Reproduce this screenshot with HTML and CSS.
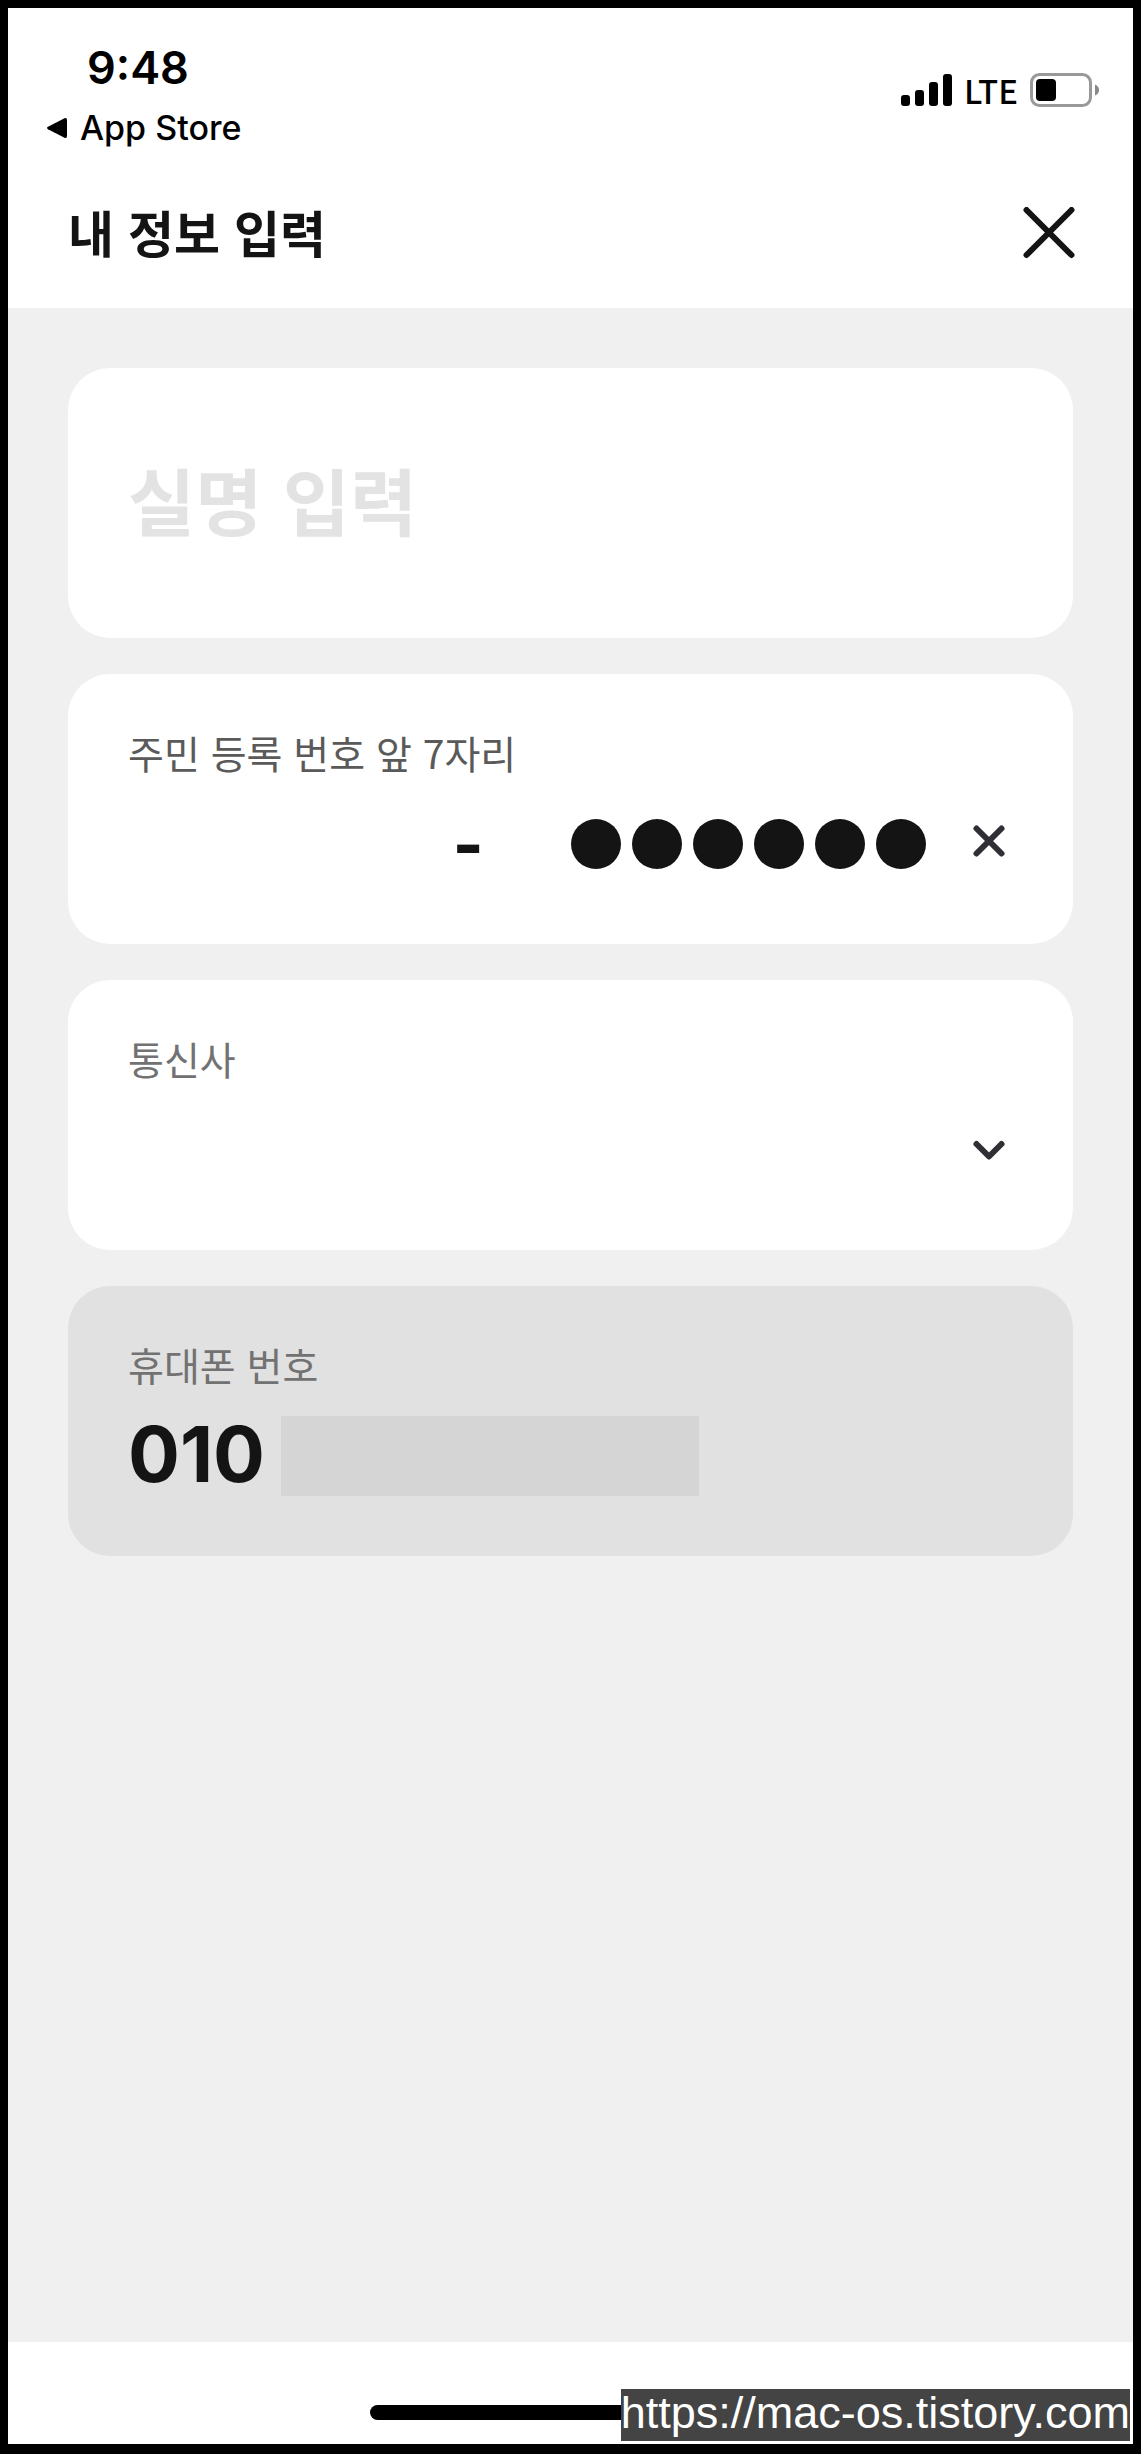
FILE: index.html
```html
<!DOCTYPE html>
<html lang="ko">
<head>
<meta charset="utf-8">
<meta name="viewport" content="width=device-width, initial-scale=1">
<title>내 정보 입력</title>
<link rel="stylesheet" href="styles.css">
</head>
<body>
<div class="screen">
  <div class="status">
    <div class="status-left">
      <span class="time">9:48</span>
      <a class="back" href="#">
        <svg width="22" height="22" viewBox="0 0 22 22" aria-hidden="true"><path d="M2 9.800 18.500 1.300Q21 .3 21 3V19Q21 21.700 18.500 20.700L2 12.200Q0 11 2 9.800Z"/></svg>
        App Store
      </a>
    </div>
    <div class="status-right">
      <svg width="51" height="34" viewBox="0 0 51 34" aria-hidden="true"><rect x="0" y="22" width="9" height="11" rx="3"/><rect x="14" y="17" width="9" height="16" rx="3"/><rect x="28" y="9" width="9" height="24" rx="3"/><rect x="42" y="1" width="9" height="32" rx="3"/></svg>
      <span class="network">LTE</span>
      <svg width="70" height="34" viewBox="0 0 70 34" aria-hidden="true"><rect x="1.500" y="1.500" width="59" height="31" rx="8" fill="none" stroke="#999" stroke-width="3"/><rect x="6" y="6" width="20" height="22" rx="4"/><path d="M65 11.500Q69 13 69 17T65 22.500Z" fill="#888"/></svg>
    </div>
  </div>

  <header class="header">
    <h1 class="title">내 정보 입력</h1>
    <button class="icon-button" type="button" aria-label="닫기">
      <svg width="52" height="52" viewBox="0 0 52 52" aria-hidden="true"><path d="M3.500 3 48.500 48M48.500 3 3.500 48" fill="none" stroke="#141414" stroke-width="6" stroke-linecap="round"/></svg>
    </button>
  </header>

  <main class="content">
    <form class="form">
      <div class="card card-name">
        <input class="field" type="text" aria-label="실명 입력" placeholder="실명 입력">
      </div>

      <div class="card">
        <label class="label label-filled" for="rrn">주민 등록 번호 앞 7자리</label>
        <div class="row">
          <input class="field" id="rrn" type="text" inputmode="numeric" maxlength="6">
          <span class="dash">-</span>
          <input class="field field-digit" type="text" inputmode="numeric" maxlength="1" aria-label="주민 등록 번호 일곱째 자리">
          <span class="mask" aria-hidden="true"><i class="dot"></i><i class="dot"></i><i class="dot"></i><i class="dot"></i><i class="dot"></i><i class="dot"></i></span>
          <button class="icon-button clear" type="button" aria-label="지우기">
            <svg width="48" height="48" viewBox="0 0 48 48" aria-hidden="true"><path d="M11.500 8.500 36.500 33.500M36.500 8.500 11.500 33.500" fill="none" stroke="#2f2f35" stroke-width="6" stroke-linecap="round"/></svg>
          </button>
        </div>
      </div>

      <div class="card">
        <label class="label" for="carrier">통신사</label>
        <div class="row">
          <select class="field" id="carrier"><option value=""></option></select>
          <svg class="chevron" width="48" height="48" viewBox="0 0 48 48" aria-hidden="true"><path d="M11.500 18 24 30.500 36.500 18" fill="none" stroke="#2f2f35" stroke-width="6" stroke-linecap="round" stroke-linejoin="round"/></svg>
        </div>
      </div>

      <div class="card card-disabled">
        <label class="label" for="phone">휴대폰 번호</label>
        <div class="row">
          <input class="field field-phone" id="phone" type="tel" value="010" readonly>
          <span class="redacted"></span>
        </div>
      </div>
    </form>
  </main>

  <footer class="footer">
    <div class="home-bar"></div>
    <a class="watermark" href="https://mac-os.tistory.com">https://mac-os.tistory.com</a>
  </footer>
</div>
</body>
</html>
```
FILE: styles.css
```css
* {
  box-sizing: border-box;
}

body {
  margin: 0;
  background: #000;
  color: #141414;
  font-family: Inter, "Noto Sans CJK KR", sans-serif;
}

.screen {
  display: flex;
  flex-direction: column;
  min-height: 100vh;
  border: solid #000;
  border-width: 8px 8px 10px;
  background: #fff;
}

.status {
  display: flex;
  justify-content: space-between;
  padding: 32px 33px 8px 38px;
  color: #000;
}

.status-left {
  display: flex;
  flex-direction: column;
  gap: 8px;
}

.time {
  padding-left: 41px;
  font-size: 45px;
  font-weight: 600;
  line-height: 56px;
}

.back {
  display: flex;
  align-items: center;
  gap: 12px;
  color: inherit;
  font-size: 34px;
  font-weight: 500;
  line-height: 48px;
  text-decoration: none;
}

.status-right {
  display: flex;
  align-items: center;
  gap: 12px;
  padding-bottom: 12px;
}

.network {
  font-family: "Noto Sans CJK KR", sans-serif;
  font-size: 33px;
  font-weight: 500;
  line-height: 48px;
}

.header {
  display: flex;
  align-items: center;
  justify-content: space-between;
  padding: 33px 58px 39px 60px;
}

.title {
  margin: 0;
  font-family: "Noto Sans CJK KR", sans-serif;
  font-size: 50px;
  font-weight: 700;
  line-height: 76px;
}

.icon-button {
  display: flex;
  flex: none;
  padding: 0;
  border: 0;
  background: none;
}

.header .icon-button {
  padding-top: 4px;
}

.content {
  flex: 1;
  padding: 60px;
  background: #f0f0f0;
}

.form {
  display: flex;
  flex-direction: column;
  gap: 36px;
}

.card {
  display: flex;
  flex-direction: column;
  gap: 24px;
  padding: 50px 60px 60px;
  border-radius: 42px;
  background: #fff;
}

.card-name {
  padding: 70px 60px 80px;
}

.card-disabled {
  background: #e1e1e1;
}

.label {
  color: #727272;
  font-family: "Noto Sans CJK KR", sans-serif;
  font-size: 39px;
  line-height: 56px;
}

.label-filled {
  color: #5a5a5a;
}

.row {
  display: flex;
  align-items: center;
  height: 80px;
}

.field {
  flex: 1;
  min-width: 0;
  height: 80px;
  padding: 0;
  border: 0;
  outline: 0;
  appearance: none;
  background: none;
  color: inherit;
  font-family: Inter, "Noto Sans CJK KR", sans-serif;
  font-size: 77px;
  font-weight: 700;
}

.card-name .field {
  flex: none;
  height: 120px;
  font-family: "Noto Sans CJK KR", sans-serif;
  font-size: 73px;
}

.field::placeholder {
  color: #e3e3e3;
  opacity: 1;
}

.dash {
  font-family: "Noto Sans CJK KR", sans-serif;
  font-size: 80px;
  font-weight: 700;
  line-height: 80px;
}

.field-digit {
  flex: 0 0 88px;
}

.mask {
  display: flex;
  gap: 11px;
}

.dot {
  width: 50px;
  height: 50px;
  border-radius: 50%;
  background: #141414;
}

.clear {
  margin-left: 39px;
}

.chevron {
  flex: none;
}

.field-phone {
  flex: 0 0 153px;
  padding-bottom: 4px;
}

.redacted {
  width: 418px;
  height: 80px;
  background: #d5d5d5;
}

.footer {
  position: relative;
  padding: 63px 0 24px;
}

.home-bar {
  width: 402px;
  height: 15px;
  margin: 0 auto;
  border-radius: 8px;
  background: #000;
}

.watermark {
  position: absolute;
  right: 3px;
  bottom: 3px;
  padding-bottom: 4px;
  background: #444;
  color: #fff;
  font-family: "Liberation Sans", sans-serif;
  font-size: 45px;
  line-height: 48px;
  text-decoration: none;
  white-space: nowrap;
}
```
